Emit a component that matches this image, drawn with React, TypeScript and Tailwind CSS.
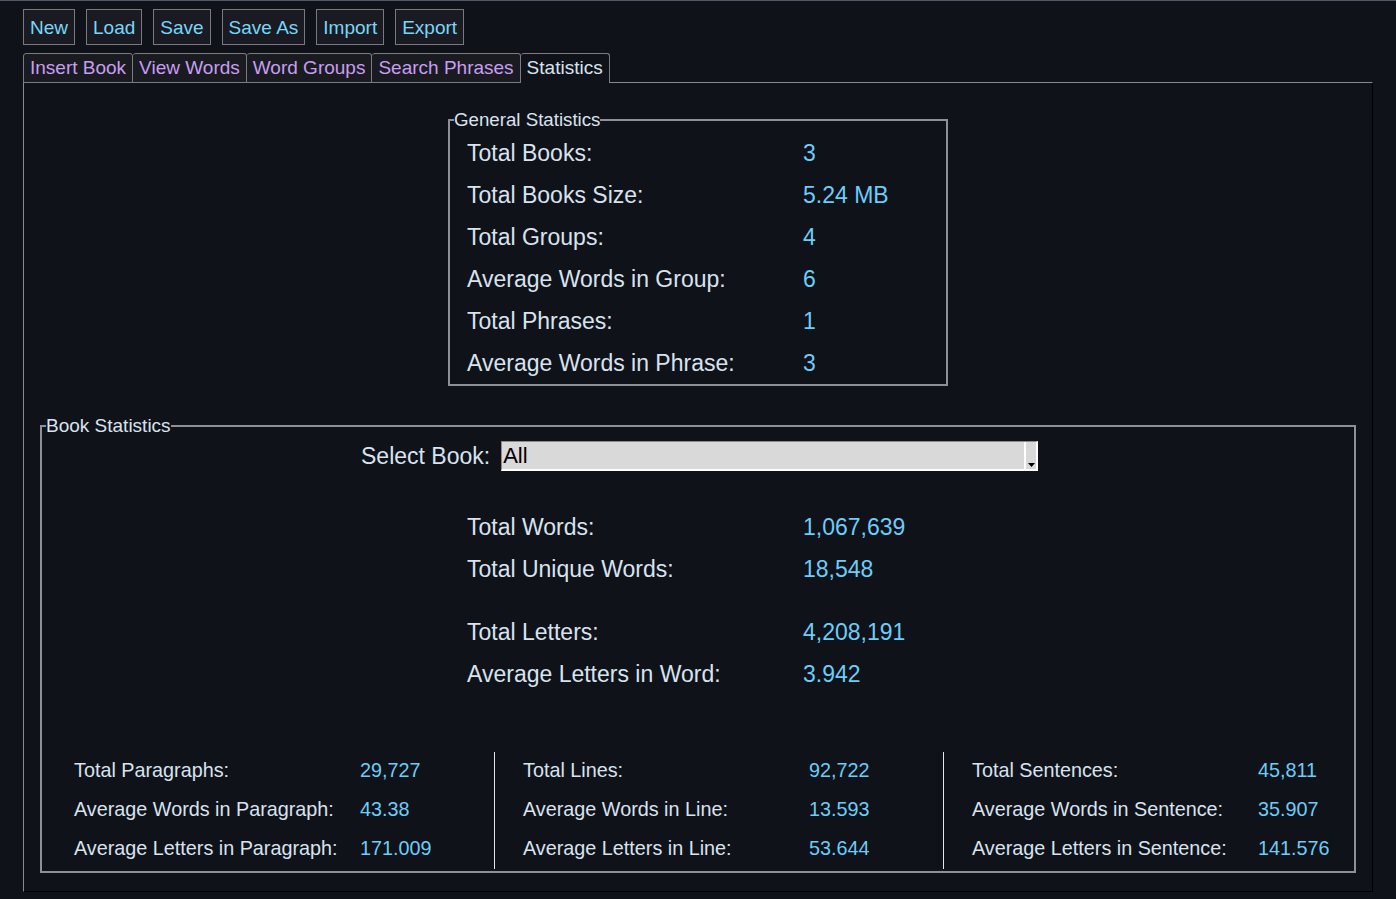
import React from "react";

const toolbar = ["New", "Load", "Save", "Save As", "Import", "Export"];
const tabs = ["Insert Book", "View Words", "Word Groups", "Search Phrases", "Statistics"];

const general = [
  ["Total Books:", "3"],
  ["Total Books Size:", "5.24 MB"],
  ["Total Groups:", "4"],
  ["Average Words in Group:", "6"],
  ["Total Phrases:", "1"],
  ["Average Words in Phrase:", "3"],
];

const wordStats = [
  ["Total Words:", "1,067,639"],
  ["Total Unique Words:", "18,548"],
];

const letterStats = [
  ["Total Letters:", "4,208,191"],
  ["Average Letters in Word:", "3.942"],
];

const columns = [
  [
    ["Total Paragraphs:", "29,727"],
    ["Average Words in Paragraph:", "43.38"],
    ["Average Letters in Paragraph:", "171.009"],
  ],
  [
    ["Total Lines:", "92,722"],
    ["Average Words in Line:", "13.593"],
    ["Average Letters in Line:", "53.644"],
  ],
  [
    ["Total Sentences:", "45,811"],
    ["Average Words in Sentence:", "35.907"],
    ["Average Letters in Sentence:", "141.576"],
  ],
];

function StatRow({ label, value }: { label: string; value: string }) {
  return (
    <div className="flex items-center h-[42px] text-[23px]">
      <span className="w-[336px] text-[#d8e3ee]">{label}</span>
      <span className="text-[#6ccdf7]">{value}</span>
    </div>
  );
}

export default function App() {
  return (
    <div
      className="h-[899px] w-full bg-[#10121a] border-t border-[#4f5866] overflow-hidden"
      style={{ fontFamily: '"Liberation Sans", Arial, sans-serif' }}
    >
      {/* toolbar */}
      <div className="flex gap-[11px] pl-[23px] pt-[8px]">
        {toolbar.map((b) => (
          <button
            key={b}
            className="h-[36px] px-[6px] bg-[#1a1b22] border border-[#7a7a7e] text-[19px] text-[#78d6f8] leading-none"
          >
            {b}
          </button>
        ))}
      </div>

      {/* tabs */}
      <div className="flex pl-[23px] mt-[8px] h-[30px] items-end relative z-10">
        {tabs.map((t, i) => {
          const active = t === "Statistics";
          return (
            <div
              key={t}
              className={`h-[30px] px-[6px] flex items-center text-[19px] rounded-t-[3px] border-t border-r border-[#7c7c80] ${
                i === 0 ? "border-l" : ""
              } ${
                active
                  ? "bg-[#10121a] text-[#d6e4f0] border-b-0"
                  : "bg-[#1a1b21] text-[#c79ef2] border-b"
              }`}
            >
              {t}
            </div>
          );
        })}
      </div>

      {/* panel */}
      <div className="ml-[23px] w-[1350px] h-[810px] -mt-px border-t border-l border-[#8a8a8e] border-r border-b border-r-black border-b-black flex flex-col">
        {/* General Statistics */}
        <fieldset className="mx-auto mt-[28px] w-[500px] border-2 border-[#8f8f95]">
          <legend className="ml-[4px] text-[18.7px] leading-[18px] text-[#d8e3ee]">General Statistics</legend>
          <div className="pl-[17px] pt-[3px]">
            {general.map(([l, v]) => (
              <StatRow key={l} label={l} value={v} />
            ))}
          </div>
        </fieldset>

        {/* Book Statistics */}
        <fieldset className="mx-[16px] mt-[31px] border-2 border-[#8f8f95] pb-[2px]">
          <legend className="ml-[4px] text-[19px] leading-[18px] text-[#d8e3ee]">Book Statistics</legend>

          <div className="flex items-center gap-[11px] pt-[4px] pl-[319px]">
            <span className="text-[23px] text-[#d8e3ee]">Select Book:</span>
            <div className="w-[537px] h-[30px] bg-[#d9d9d9] border-t border-l border-[#8b8b8b] border-b-2 border-r-2 border-b-white border-r-white flex items-center">
              <span className="flex-1 pl-[1px] text-[22px] text-black leading-none">All</span>
              <div className="w-[12px] h-full border-l-2 border-white flex items-end justify-center pb-[2px]">
                <svg width="7" height="4" viewBox="0 0 7 4">
                  <path d="M0 0H7L3.5 4Z" fill="#000" />
                </svg>
              </div>
            </div>
          </div>

          <div className="w-[500px] mx-auto pl-[19px] mt-[33px]">
            {wordStats.map(([l, v]) => (
              <StatRow key={l} label={l} value={v} />
            ))}
            <div className="h-[21px]" />
            {letterStats.map(([l, v]) => (
              <StatRow key={l} label={l} value={v} />
            ))}
          </div>

          <div className="flex mt-[56px] h-[117px]">
            {columns.map((col, ci) => (
              <React.Fragment key={ci}>
                {ci > 0 && <div className="w-px bg-[#e6e6e6] h-[117px]" />}
                <div
                  className={
                    ci === 0 ? "w-[452px] pl-[32px]" : ci === 1 ? "w-[448px] pl-[28px]" : "flex-1 pl-[28px]"
                  }
                >
                  {col.map(([l, v]) => (
                    <div key={l} className="flex items-center h-[39px] text-[19.8px]">
                      <span className="w-[286px] text-[#d8e3ee]">{l}</span>
                      <span className="text-[#6ccdf7]">{v}</span>
                    </div>
                  ))}
                </div>
              </React.Fragment>
            ))}
          </div>
        </fieldset>
      </div>
    </div>
  );
}
